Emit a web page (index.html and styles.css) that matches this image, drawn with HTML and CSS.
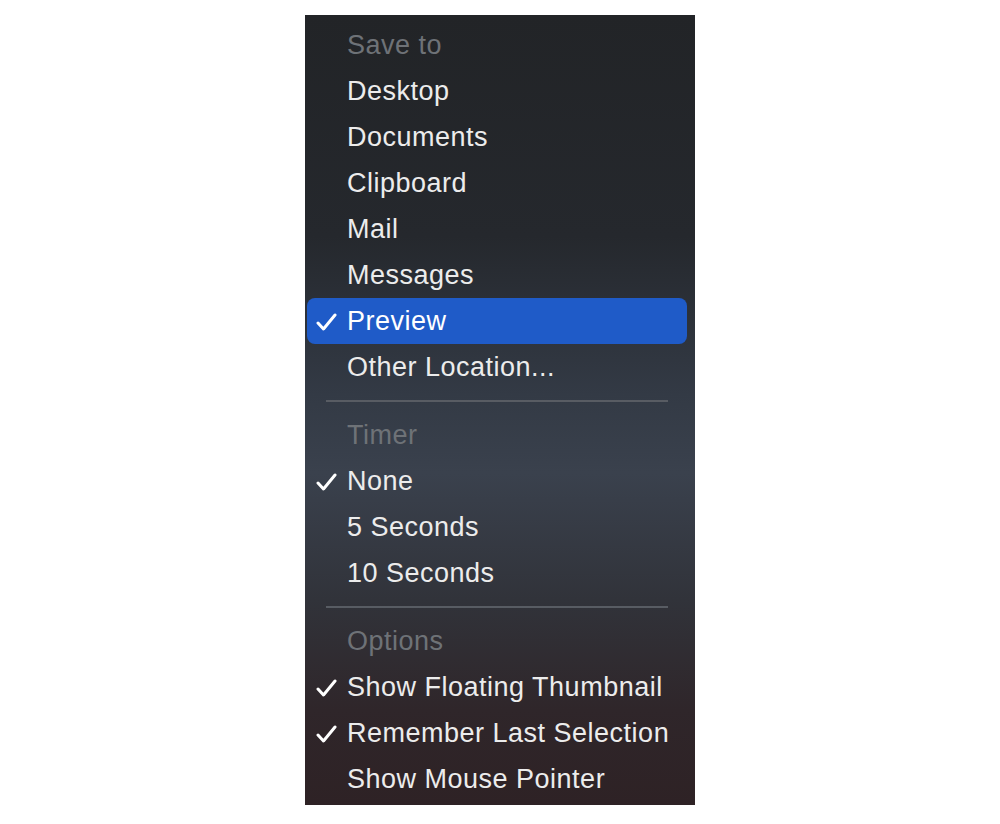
FILE: index.html
```html
<!DOCTYPE html>
<html lang="en">
<head>
  <meta charset="UTF-8" />
  <title>Screenshot Options</title>
  <link rel="stylesheet" href="styles.css">
</head>
<body>
  <div class="menu">
    <div class="row header">Save to</div>
    <div class="row">Desktop</div>
    <div class="row">Documents</div>
    <div class="row">Clipboard</div>
    <div class="row">Mail</div>
    <div class="row">Messages</div>
    <div class="row selected checked">Preview</div>
    <div class="row">Other Location...</div>
    <div class="sep"></div>

    <div class="row header">Timer</div>
    <div class="row checked">None</div>
    <div class="row">5 Seconds</div>
    <div class="row">10 Seconds</div>
    <div class="sep"></div>

    <div class="row header">Options</div>
    <div class="row checked">Show Floating Thumbnail</div>
    <div class="row checked">Remember Last Selection</div>
    <div class="row">Show Mouse Pointer</div>
  </div>
</body>
</html>
```

FILE: styles.css
```css
body {
  margin: 0;
  background: #fff;
  font-family: "Liberation Sans", Arial, sans-serif;
}
.menu {
  width: 390px;
  margin: 15px auto 0;
  padding: 7px 0 4px;
  box-sizing: border-box;
  height: 790px;
  background: linear-gradient(180deg, #222427 0%, #25282d 28%, #333a45 48%, #3a414d 58%, #31333a 74%, #2f262a 88%, #2e2225 100%);
}
.row {
  position: relative;
  height: 46px;
  display: flex;
  align-items: center;
  padding-left: 40px;
  margin: 0 8px 0 2px;
  font-size: 27px;
  letter-spacing: 0.5px;
  color: #ececec;
  border-radius: 8px;
}
.row.header {
  color: #6e7277;
}
.row.selected {
  background: #1f5bc8;
  color: #fff;
}
.row.checked::before {
  content: "";
  position: absolute;
  left: 9px;
  top: 15px;
  width: 21px;
  height: 18px;
  background: url("data:image/svg+xml;utf8,<svg xmlns='http://www.w3.org/2000/svg' viewBox='0 0 21 18'><path d='M2 10 L7.5 16 L19 2' fill='none' stroke='white' stroke-width='3' stroke-linecap='round' stroke-linejoin='round'/></svg>") no-repeat;
}
.sep {
  height: 22px;
  display: flex;
  align-items: center;
  padding: 0 27px 0 21px;
}
.sep::after {
  content: "";
  flex: 1;
  height: 2px;
  background: #585c63;
}
```
